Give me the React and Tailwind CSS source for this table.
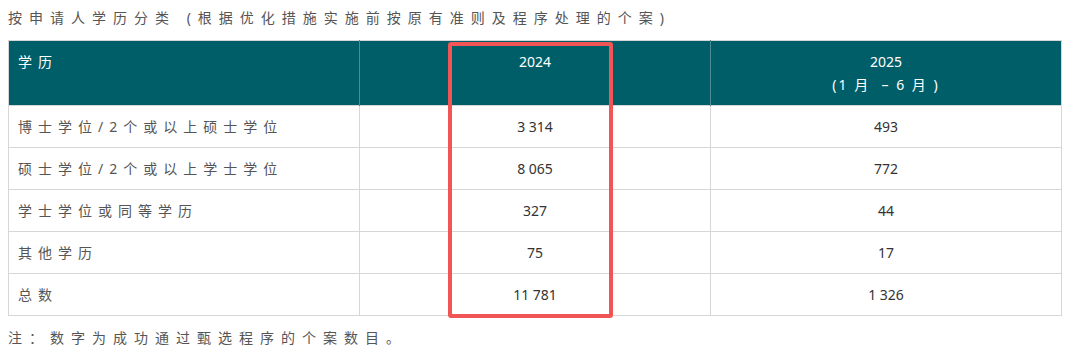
import React from "react";

const rows = [
  { label: "博士学位/2个或以上硕士学位", y2024: "3 314", y2025: "493" },
  { label: "硕士学位/2个或以上学士学位", y2024: "8 065", y2025: "772" },
  { label: "学士学位或同等学历", y2024: "327", y2025: "44" },
  { label: "其他学历", y2024: "75", y2025: "17" },
  { label: "总数", y2024: "11 781", y2025: "1 326" },
];

const cjk = { fontFamily: '"Noto Sans", "Noto Sans CJK SC", sans-serif' };

export default function App() {
  return (
    <div className="w-[1080px] h-[354px] bg-white px-2 pt-[7px]" style={cjk}>
      <p className="text-[14px] leading-[22px] tracking-[7px] text-[#555]">
        按申请人学历分类 (根据优化措施实施前按原有准则及程序处理的个案)
      </p>

      <div className="relative mt-[11px] w-[1054px]">
        <table className="w-full table-fixed border-collapse border border-[#d6d6d6]">
          <thead>
            <tr className="bg-[#005e69] text-white h-[65px] align-top">
              <th className="w-1/3 text-left font-normal px-[9px] pt-[9px] text-[14px] leading-[23px] tracking-[6px] border-r border-[#4d8a92]">
                学历
              </th>
              <th className="w-1/3 font-normal pt-[9px] text-[14px] leading-[23px] border-r border-[#4d8a92]">
                2024
              </th>
              <th className="w-1/3 font-normal pt-[9px] text-[14px] leading-[23px]">
                <div>2025</div>
                <div className="tracking-[2px]">(1 月 &nbsp;– 6 月 )</div>
              </th>
            </tr>
          </thead>
          <tbody>
            {rows.map((r) => (
              <tr key={r.label} className="h-[42px] border-t border-[#d6d6d6]">
                <td className="px-[9px] text-[14px] tracking-[6px] text-[#555]">
                  {r.label}
                </td>
                <td className="text-center text-[14px] text-[#333] border-l border-[#d6d6d6]">
                  {r.y2024}
                </td>
                <td className="text-center text-[14px] text-[#333] border-l border-[#d6d6d6]">
                  {r.y2025}
                </td>
              </tr>
            ))}
          </tbody>
        </table>

        <div className="absolute left-[440px] top-[2px] w-[165px] h-[276px] border-[4px] border-[#f25555] rounded-[3px] pointer-events-none" />
      </div>

      <p className="mt-[11px] text-[14px] leading-[22px] tracking-[7px] text-[#555]">
        注：数字为成功通过甄选程序的个案数目。
      </p>
    </div>
  );
}
